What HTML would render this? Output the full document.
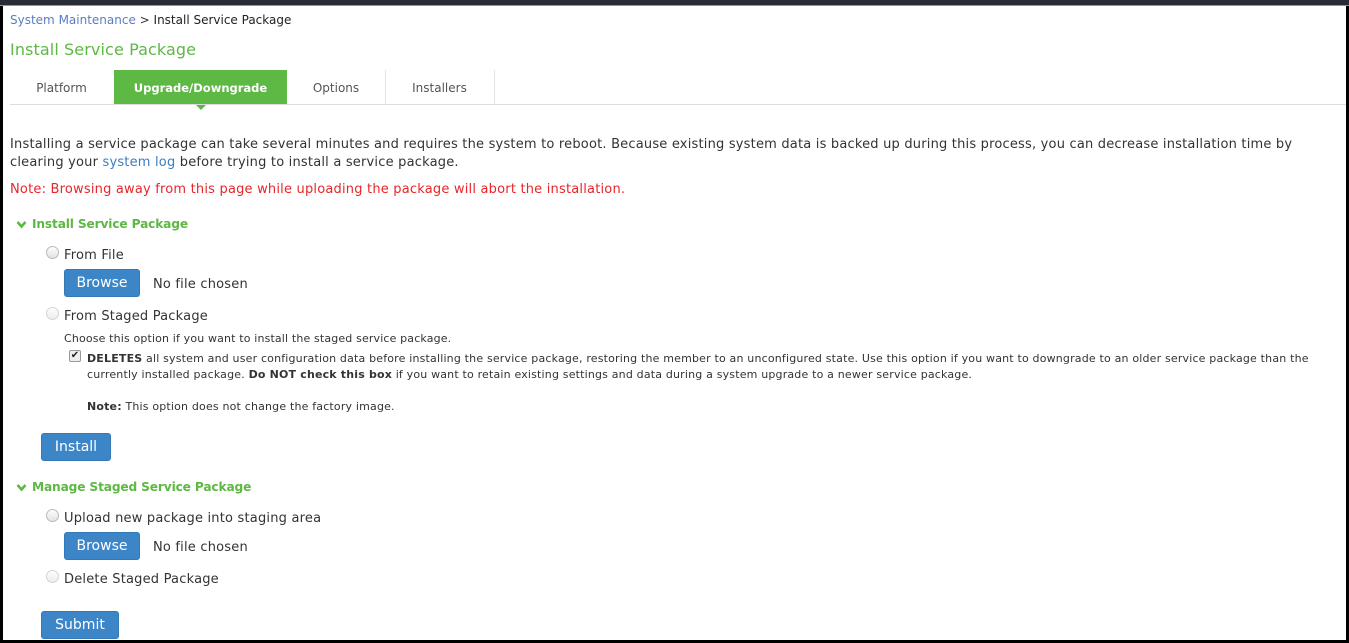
<!DOCTYPE html>
<html><head><meta charset="utf-8"><style>
body{margin:0;width:1349px;height:643px;overflow:hidden;background:#000;font-family:"DejaVu Sans","Liberation Sans",sans-serif;color:#333;position:relative}
#top{position:absolute;left:0;top:0;width:1349px;height:5px;background:#262d36;border-bottom:1px solid #6cbb4a}
#main{position:absolute;left:3px;top:6px;width:1343px;height:634px;background:#fff}
.a{position:absolute;white-space:nowrap}
.t13{font-size:13px;letter-spacing:0.2px}
.tab{position:absolute;top:64px;height:34px;line-height:36px;font-size:12px;color:#555;text-align:center;border-right:1px solid #e3e3e3}
.btn{position:absolute;background:#3c86c8;color:#fff;border-radius:3px;font-size:14px;text-align:center;border:1px solid #3478b5;box-sizing:border-box}
.radio{position:absolute;width:11px;height:11px;border-radius:50%;border:1px solid #b9b9b9;background:linear-gradient(#fdfdfd,#e2e2e2)}
.h{font-weight:bold;color:#5db844;font-size:12.2px;letter-spacing:-0.15px}
.g{color:#5db844}
</style></head><body>
<div id="top"></div>
<div id="main">
<div class="a" style="left:7px;top:7px;font-size:12px"><span style="color:#5c7cc2">System Maintenance</span> &gt; <span style="color:#222">Install Service Package</span></div>
<div class="a g" style="left:7px;top:34px;font-size:16px;letter-spacing:0.1px">Install Service Package</div>
<div class="tab" style="left:7px;width:103px;border-right:none">Platform</div>
<div class="tab" style="left:111px;width:173px;background:#5db844;color:#fff;border:none;font-weight:bold;font-size:11.5px">Upgrade/Downgrade</div>
<div style="position:absolute;left:192px;top:98px;width:0;height:0;border-left:6px solid transparent;border-right:6px solid transparent;border-top:6px solid #5db844"></div>
<div class="tab" style="left:284px;width:98px;border-left:none">Options</div>
<div class="tab" style="left:382px;width:109px">Installers</div>
<div style="position:absolute;left:7px;top:98px;width:1336px;height:1px;background:#ddd"></div>
<div class="a t13" style="left:7px;top:130px;line-height:18px">Installing a service package can take several minutes and requires the system to reboot. Because existing system data is backed up during this process, you can decrease installation time by<br>clearing your <span style="color:#3c7cc2">system log</span> before trying to install a service package.</div>
<div class="a t13" style="left:7px;top:176px;color:#e8262a">Note: Browsing away from this page while uploading the package will abort the installation.</div>
<svg style="position:absolute;left:13px;top:214px" width="11" height="9" viewBox="0 0 11 9"><path d="M1.5 2 L5.5 6.5 L9.5 2" stroke="#5db844" stroke-width="2.6" fill="none"/></svg>
<div class="a h" style="left:29px;top:211px">Install Service Package</div>
<div class="radio" style="left:43px;top:240px"></div>
<div class="a t13" style="left:61px;top:242px">From File</div>
<div class="btn" style="left:61px;top:263px;width:76px;height:28px;line-height:26px">Browse</div>
<div class="a t13" style="left:150px;top:271px">No file chosen</div>
<div class="radio" style="left:43px;top:301px;opacity:.6"></div>
<div class="a t13" style="left:61px;top:303px">From Staged Package</div>
<div class="a" style="left:61px;top:326px;font-size:11px;letter-spacing:0.15px">Choose this option if you want to install the staged service package.</div>
<div style="position:absolute;left:66px;top:344px;width:10px;height:10px;border:1px solid #999;border-radius:2px;background:#eee;font-size:10px;line-height:10px;text-align:center;color:#222">&#10004;</div>
<div class="a" style="left:84px;top:345px;font-size:11px;line-height:16px;letter-spacing:0.18px"><b>DELETES</b> all system and user configuration data before installing the service package, restoring the member to an unconfigured state. Use this option if you want to downgrade to an older service package than the<br>currently installed package. <b>Do NOT check this box</b> if you want to retain existing settings and data during a system upgrade to a newer service package.<br><br><b>Note:</b> This option does not change the factory image.</div>
<div class="btn" style="left:38px;top:427px;width:70px;height:28px;line-height:26px">Install</div>
<svg style="position:absolute;left:13px;top:477px" width="11" height="9" viewBox="0 0 11 9"><path d="M1.5 2 L5.5 6.5 L9.5 2" stroke="#5db844" stroke-width="2.6" fill="none"/></svg>
<div class="a h" style="left:29px;top:474px">Manage Staged Service Package</div>
<div class="radio" style="left:43px;top:503px"></div>
<div class="a t13" style="left:61px;top:505px">Upload new package into staging area</div>
<div class="btn" style="left:61px;top:526px;width:76px;height:28px;line-height:26px">Browse</div>
<div class="a t13" style="left:150px;top:534px">No file chosen</div>
<div class="radio" style="left:43px;top:564px;opacity:.6"></div>
<div class="a t13" style="left:61px;top:566px">Delete Staged Package</div>
<div class="btn" style="left:38px;top:605px;width:78px;height:28px;line-height:26px">Submit</div>
</div>
</body></html>
